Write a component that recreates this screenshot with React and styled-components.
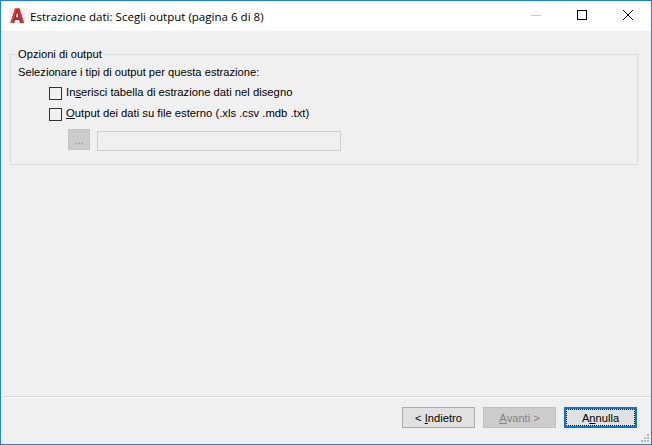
import React from 'react';
import styled, { createGlobalStyle } from 'styled-components';

const GlobalStyle = createGlobalStyle`
  html, body {
    margin: 0;
    padding: 0;
    background: #f0f0f0;
  }
  * {
    box-sizing: border-box;
  }
`;

const Window = styled.div`
  width: 652px;
  height: 445px;
  display: flex;
  flex-direction: column;
  border: 1px solid #1b84d6;
  background: #f0f0f0;
  color: #000;
  font-family: "Liberation Sans", Arial, sans-serif;
  font-size: 11.17px;
  overflow: hidden;
`;

const TitleBar = styled.div`
  height: 30px;
  flex: none;
  display: flex;
  align-items: center;
  background: #fff;
  padding-left: 8px;
`;

const Title = styled.div`
  margin-left: 5px;
  flex: 1;
  font-family: "Open Sans", sans-serif;
  font-size: 11.55px;
  white-space: nowrap;
`;

const WinButton = styled.div`
  width: 46px;
  height: 30px;
  padding-bottom: 2px;
  display: flex;
  align-items: center;
  justify-content: center;
`;

const Body = styled.div`
  flex: 1;
  padding: 16px 13px 0 9px;
`;

const Group = styled.fieldset`
  margin: 0;
  padding: 0 7px;
  height: 118px;
  border: 1px solid #dcdcdc;
  min-width: 0;
`;

const Legend = styled.legend`
  padding: 0 1px;
  margin-left: -1px;
  line-height: 14px;
`;

const Hint = styled.div`
  margin-top: 4px;
  line-height: 14px;
`;

const OptionRow = styled.div`
  display: flex;
  align-items: center;
  height: 20px;
  padding-left: 31px;
  margin-top: ${(p) => p.$gap}px;
  font-size: 11.25px;
`;

const Check = styled.span`
  width: 13px;
  height: 13px;
  margin-top: 2px;
  margin-right: 4px;
  border: 1px solid #333;
  background: #f0f0f0;
  flex: none;
`;

const PathRow = styled.div`
  display: flex;
  align-items: flex-start;
  gap: 7px;
  margin-top: 6px;
  padding-left: 50px;
`;

const BrowseButton = styled.div`
  width: 22px;
  height: 21px;
  background: #cccccc;
  border: 1px solid #c4c4c4;
  color: #8a8a8a;
  display: flex;
  align-items: center;
  justify-content: center;
`;

const PathInput = styled.div`
  width: 244px;
  height: 20px;
  margin-top: 2px;
  background: #f0f0f0;
  border: 1px solid #d0d0d0;
`;

const Footer = styled.div`
  flex: none;
  height: 48px;
  margin: 0 1px 0 2px;
  border-top: 1px solid #dadada;
  box-shadow: inset 0 1px 0 #f8f8f8;
  display: flex;
  justify-content: flex-end;
  align-items: flex-start;
  gap: 8px;
  padding: 10px 13px 0 0;
  position: relative;
`;

const Button = styled.div`
  width: 73px;
  height: 21px;
  display: flex;
  align-items: center;
  justify-content: center;
  background: ${(p) => (p.$disabled ? '#cccccc' : '#e1e1e1')};
  border: 1px solid ${(p) => (p.$disabled ? '#bfbfbf' : '#adadad')};
  color: ${(p) => (p.$disabled ? '#838383' : '#000')};
  position: relative;
  ${(p) => p.$focus && `
    border: 2px solid #0078d7;
    &::after {
      content: '';
      position: absolute;
      inset: 0;
      border: 1px dotted #000;
    }
  `}
`;

const Key = styled.span`
  text-decoration: underline;
  text-underline-offset: 1px;
`;

const Grip = styled.svg`
  position: absolute;
  right: -1px;
  bottom: 0;
`;

const AutocadLogo = () => (
  <svg width="16" height="16" viewBox="0 0 16 16">
    <rect width="16" height="16" fill="#fbeeee" />
    <path d="M1.5 15 L6 0.5 H10.5 L15 15 H11 L10.2 12 H6 L5.2 15 Z M6.9 9.2 H9.4 L8.2 4.5 Z" fillRule="evenodd" fill="#ad2730" />
    <path d="M1.5 15 L6 0.5 H7.8 L3.5 15 Z" fill="#cf434a" />
    <path d="M12.5 15 L8.9 0.5 H10.5 L15 15 Z" fill="#c23a42" />
  </svg>
);

export default function App() {
  return (
    <Window>
      <GlobalStyle />
      <TitleBar>
        <AutocadLogo />
        <Title>Estrazione dati: Scegli output (pagina 6 di 8)</Title>
        <WinButton>
          <svg width="10" height="10" viewBox="0 0 10 10">
            <rect x="0" y="5" width="10" height="1" fill="#c8c8c8" />
          </svg>
        </WinButton>
        <WinButton>
          <svg width="10" height="10" viewBox="0 0 10 10">
            <rect x="0.5" y="0.5" width="9" height="9" fill="none" stroke="#000" />
          </svg>
        </WinButton>
        <WinButton>
          <svg width="10" height="10" viewBox="0 0 10 10">
            <path d="M0 0 L10 10 M10 0 L0 10" stroke="#000" strokeWidth="1" />
          </svg>
        </WinButton>
      </TitleBar>
      <Body>
        <Group>
          <Legend>Opzioni di output</Legend>
          <Hint>Selezionare i tipi di output per questa estrazione:</Hint>
          <OptionRow $gap={3}>
            <Check />
            <span>In<Key>s</Key>erisci tabella di estrazione dati nel disegno</span>
          </OptionRow>
          <OptionRow $gap={1}>
            <Check />
            <span><Key>O</Key>utput dei dati su file esterno (.xls .csv .mdb .txt)</span>
          </OptionRow>
          <PathRow>
            <BrowseButton>...</BrowseButton>
            <PathInput />
          </PathRow>
        </Group>
      </Body>
      <Footer>
        <Button>&lt;&nbsp;<Key>I</Key>ndietro</Button>
        <Button $disabled><Key>A</Key>vanti &gt;</Button>
        <Button $focus>A<Key>n</Key>nulla</Button>
        <Grip width="12" height="12" viewBox="0 0 12 12">
          <g fill="#b8b8b8">
            <rect x="8" y="2" width="2" height="2" />
            <rect x="5" y="5" width="2" height="2" />
            <rect x="8" y="5" width="2" height="2" />
            <rect x="2" y="8" width="2" height="2" />
            <rect x="5" y="8" width="2" height="2" />
            <rect x="8" y="8" width="2" height="2" />
          </g>
        </Grip>
      </Footer>
    </Window>
  );
}
